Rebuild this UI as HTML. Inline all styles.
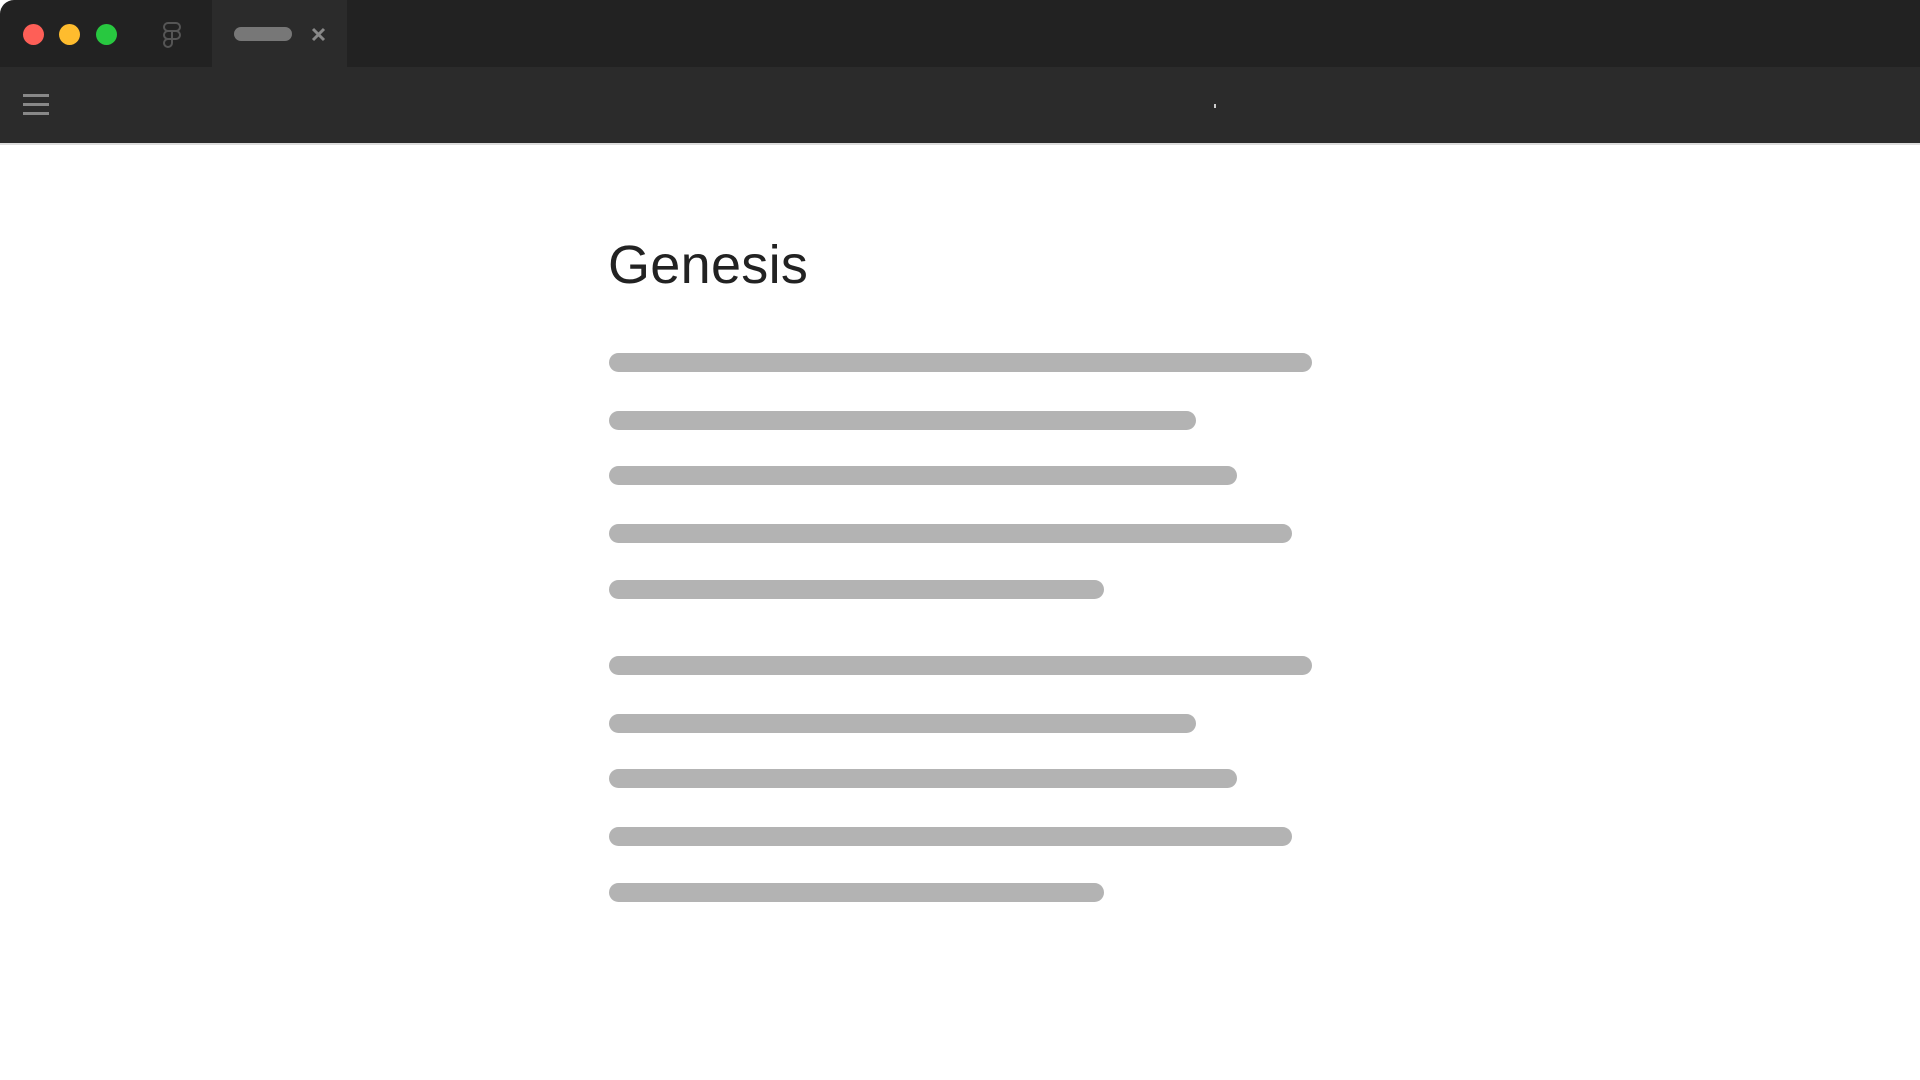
<!DOCTYPE html>
<html><head><style>
body{margin:0;width:1920px;height:1080px;background:#fff;position:relative;overflow:hidden;font-family:"Liberation Sans",sans-serif}
.a{position:absolute}
.bar{position:absolute;left:609px;height:19px;border-radius:10px;background:#b3b3b3}
.dot{position:absolute;width:21px;height:21px;border-radius:50%;top:24px}
</style></head><body>
<div class="a" style="left:0;top:0;width:1920px;height:67px;background:#222;border-top-left-radius:14px"></div>
<div class="a" style="left:212px;top:0;width:135px;height:67px;background:#2b2b2b"></div>
<div class="a" style="left:0;top:67px;width:1920px;height:77px;background:#2b2b2b"></div>
<div class="a" style="left:0;top:143px;width:1920px;height:2px;background:#ddd"></div>
<div class="dot" style="left:23px;background:#fe5f57"></div>
<div class="dot" style="left:59px;background:#febc2e"></div>
<div class="dot" style="left:96px;background:#28c840"></div>
<svg class="a" style="left:163px;top:22px" width="18" height="26" viewBox="0 0 18 26" fill="none" stroke="#555" stroke-width="2"><path d="M5 1h8a4 4 0 0 1 0 8H5a4 4 0 0 1 0-8zM5 9h4v8H5a4 4 0 0 1 0-8zM9 9h4a4 4 0 0 1 0 8H9zM5 17h4v4a4 4 0 1 1-4-4z"/></svg>
<div class="a" style="left:234px;top:27px;width:58px;height:14px;border-radius:7px;background:#777"></div>
<svg class="a" style="left:311px;top:27px" width="15" height="15" viewBox="0 0 15 15" stroke="#888" stroke-width="3"><path d="M2 2l11 11M13 2L2 13"/></svg>
<div class="a" style="left:23px;top:94px;width:26px;height:3px;background:#888"></div>
<div class="a" style="left:23px;top:103px;width:26px;height:3px;background:#888"></div>
<div class="a" style="left:23px;top:112px;width:26px;height:3px;background:#888"></div>
<div class="a" style="left:1214px;top:104px;width:2px;height:4px;background:#ccc"></div>
<div class="a" style="left:608px;top:230px;font-size:54px;font-weight:300;color:#222;letter-spacing:0.3px;line-height:70px">Genesis</div>
<div class="bar" style="top:353px;width:703px"></div>
<div class="bar" style="top:411px;width:587px"></div>
<div class="bar" style="top:466px;width:628px"></div>
<div class="bar" style="top:524px;width:683px"></div>
<div class="bar" style="top:580px;width:495px"></div>
<div class="bar" style="top:656px;width:703px"></div>
<div class="bar" style="top:714px;width:587px"></div>
<div class="bar" style="top:769px;width:628px"></div>
<div class="bar" style="top:827px;width:683px"></div>
<div class="bar" style="top:883px;width:495px"></div>
</body></html>
